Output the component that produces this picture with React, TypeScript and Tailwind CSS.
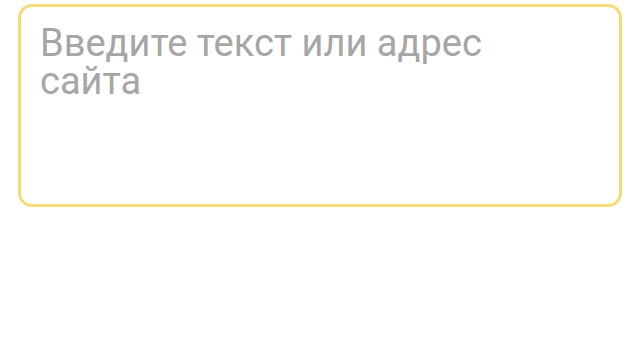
export default function App() {
  return (
    <div className="w-[640px] h-[360px] bg-white pt-[4px] px-[18px]" style={{ fontFamily: "Roboto, 'Noto Sans', sans-serif" }}>
      <div className="h-[203px] rounded-[14px] border-[3px] border-[#f6dc78] px-[19px] pt-[17px]">
        <div className="text-[38px] leading-[38px] text-[#a6a6a6] w-[480px]">Введите текст или адрес сайта</div>
      </div>
    </div>
  );
}
